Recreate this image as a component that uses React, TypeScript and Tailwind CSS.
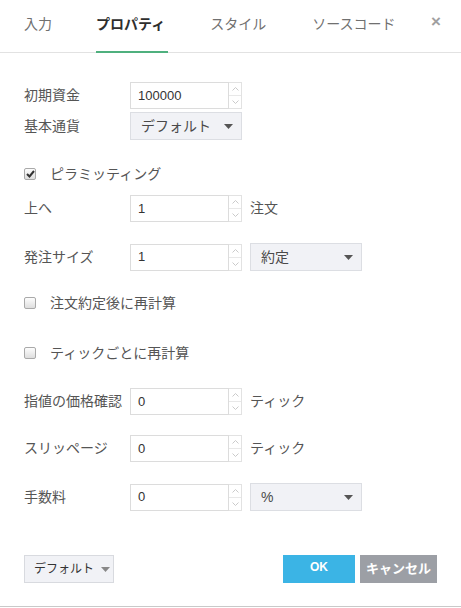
import React from 'react';

const Caret: React.FC<{ className?: string }> = ({ className }) => (
  <svg width="9" height="5" viewBox="0 0 9 5" className={className}>
    <polygon points="0,0 9,0 4.5,5" fill="currentColor" />
  </svg>
);

const Spinner: React.FC<{ value: string }> = ({ value }) => (
  <div className="flex h-[27px] w-[112px]">
    <div className="flex flex-1 items-center border border-[#dcdcdc] bg-white pl-[7px] text-[13px] text-[#333]">
      {value}
    </div>
    <div className="flex w-[13px] flex-col border border-l-0 border-[#e2e2e2] bg-white">
      <div className="flex flex-1 items-center justify-center border-b border-[#e8e8e8]">
        <svg width="7" height="4" viewBox="0 0 7 4">
          <polyline points="0.5,3.5 3.5,0.5 6.5,3.5" fill="none" stroke="#c4c4c4" strokeWidth="0.9" />
        </svg>
      </div>
      <div className="flex flex-1 items-center justify-center">
        <svg width="7" height="4" viewBox="0 0 7 4">
          <polyline points="0.5,0.5 3.5,3.5 6.5,0.5" fill="none" stroke="#c4c4c4" strokeWidth="0.9" />
        </svg>
      </div>
    </div>
  </div>
);

const Select: React.FC<{ value: string }> = ({ value }) => (
  <div className="flex h-[28px] w-[112px] items-center justify-between border border-[#dcdee3] bg-[#f1f2f6] pl-[10px] pr-[8px] text-[14px] text-[#4a4a4a]">
    <span>{value}</span>
    <Caret className="text-[#555]" />
  </div>
);

const Check: React.FC<{ checked?: boolean }> = ({ checked }) => (
  <div className="flex h-[12px] w-[12px] items-center justify-center rounded-[2px] border border-[#a9a9a9] bg-gradient-to-b from-[#fdfdfd] to-[#dedede]">
    {checked && (
      <svg width="9" height="8" viewBox="0 0 9 8">
        <polyline points="1,4 3.5,6.5 8,1" fill="none" stroke="#333" strokeWidth="2" />
      </svg>
    )}
  </div>
);

const Label: React.FC<{ children: React.ReactNode }> = ({ children }) => (
  <div className="w-[106px] shrink-0 text-[14px] text-[#555]">{children}</div>
);

const tabs = ['入力', 'プロパティ', 'スタイル', 'ソースコード'];

export default function App() {
  return (
    <div className="flex h-[607px] w-[461px] flex-col border-b border-[#c9c9c9] bg-white font-['Liberation_Sans','Noto_Sans_CJK_JP',sans-serif]">
      {/* header tabs */}
      <div className="flex h-[53px] shrink-0 items-center border-b border-[#e2e2e2] pl-[24px] text-[14px]">
        {tabs.map((t, i) => (
          <div
            key={t}
            className={`relative flex h-full items-center ${
              i === 0 ? 'mr-[44px]' : i === 1 ? 'mr-[45px]' : i === 2 ? 'mr-[46px]' : ''
            } ${i === 1 ? 'font-bold text-[#2e2e2e]' : 'text-[#707070]'}`}
          >
            <span className="-mt-[3px]">{t}</span>
            {i === 1 && <div className="absolute bottom-[-1px] left-0 right-[-3px] h-[2px] bg-[#4fb07e]" />}
          </div>
        ))}
        <div className="ml-auto mr-[20px] -mt-[8px] text-[17px] font-bold text-[#a0a0a0]">×</div>
      </div>

      <div className="flex flex-col pl-[24px]">
        <div className="mt-[29px] flex items-center">
          <Label>初期資金</Label>
          <Spinner value="100000" />
        </div>
        <div className="mt-[3px] flex items-center">
          <Label>基本通貨</Label>
          <Select value="デフォルト" />
        </div>
        <div className="mt-[24px] flex h-[20px] items-center">
          <Check checked />
          <span className="ml-[14px] text-[14px] text-[#555]">ピラミッティング</span>
        </div>
        <div className="mt-[11px] flex items-center">
          <Label>上へ</Label>
          <Spinner value="1" />
          <span className="ml-[8px] text-[14px] text-[#555]">注文</span>
        </div>
        <div className="mt-[21px] flex items-center">
          <Label>発注サイズ</Label>
          <Spinner value="1" />
          <div className="ml-[8px]">
            <Select value="約定" />
          </div>
        </div>
        <div className="mt-[22px] flex h-[20px] items-center">
          <Check />
          <span className="ml-[14px] text-[14px] text-[#555]">注文約定後に再計算</span>
        </div>
        <div className="mt-[30px] flex h-[20px] items-center">
          <Check />
          <span className="ml-[14px] text-[14px] text-[#555]">ティックごとに再計算</span>
        </div>
        <div className="mt-[25px] flex items-center">
          <Label>指値の価格確認</Label>
          <Spinner value="0" />
          <span className="ml-[8px] text-[14px] text-[#555]">ティック</span>
        </div>
        <div className="mt-[20px] flex items-center">
          <Label>スリッページ</Label>
          <Spinner value="0" />
          <span className="ml-[8px] text-[14px] text-[#555]">ティック</span>
        </div>
        <div className="mt-[21px] flex items-center">
          <Label>手数料</Label>
          <Spinner value="0" />
          <div className="ml-[8px]">
            <Select value="%" />
          </div>
        </div>
      </div>

      {/* footer */}
      <div className="mt-[44px] flex items-center px-[24px]">
        <div className="flex h-[28px] w-[90px] items-center whitespace-nowrap border border-[#d8dadf] bg-[#f1f2f6] pl-[9px] text-[12px] text-[#333]">
          <span>デフォルト</span>
          <Caret className="ml-[7px] text-[#888]" />
        </div>
        <div className="ml-auto flex h-[28px] w-[72px] items-center justify-center bg-[#3bb4e5] pb-[4px] text-[12px] font-bold text-white">
          OK
        </div>
        <div className="ml-[5px] flex h-[28px] w-[77px] items-center justify-center whitespace-nowrap bg-[#9c9fa5] text-[13px] font-bold text-white">
          キャンセル
        </div>
      </div>
    </div>
  );
}
